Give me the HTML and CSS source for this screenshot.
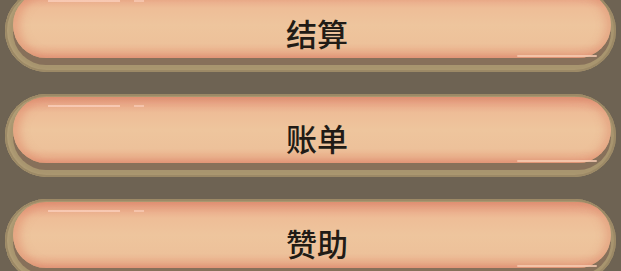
FILE: index.html
```html
<!DOCTYPE html>
<html>
  <head>
    <meta charset="UTF-8" />
    <title>菜单</title>
    <link rel="stylesheet" href="styles.css">
  </head>
  <body>
    <div class="menu">
      <div class="btn"><div class="face">结算</div></div>
      <div class="btn"><div class="face">账单</div></div>
      <div class="btn"><div class="face">赞助</div></div>
    </div>
  </body>
</html>
```
FILE: styles.css
```css
/* menu buttons */
body {
  margin: 0;
  background: #6e6353;
  font-family: "Noto Sans CJK SC", "Noto Sans", sans-serif;
  overflow: hidden;
}
.menu {
  display: flex;
  flex-direction: column;
  gap: 22px;
  margin-top: -11px;
  padding: 0 5px;
}
.btn {
  height: 83px;
  box-sizing: border-box;
  padding: 3px 5px 14px 8px;
  border-radius: 42px;
  background: #a8956f;
  box-shadow: inset 0 0 0 2px #9c8966, inset 3px 0 4px #b9a57c;
}
.face {
  position: relative;
  height: 66px;
  box-sizing: border-box;
  padding: 14px 0 0 10px;
  border-radius: 34px;
  display: flex;
  align-items: center;
  justify-content: center;
  font-size: 31px;
  font-weight: 500;
  color: #211b16;
  background: linear-gradient(to bottom, #e09476 0%, #e9a888 10%, #eebd97 24%, #eec59d 50%, #edc19a 78%, #eab08c 92%, #e39c7e 100%);
  box-shadow: 0 7px 0 #87705a, inset 7px 0 9px rgba(222, 140, 110, 0.55), inset -6px 0 8px rgba(222, 140, 110, 0.45);
}
/* glossy streaks */
.face::before {
  content: "";
  position: absolute;
  left: 35px;
  top: 8px;
  width: 96px;
  height: 2px;
  background: linear-gradient(to right, rgba(250, 205, 185, 0.85) 0, rgba(250, 205, 185, 0.85) 72px, transparent 72px, transparent 86px, rgba(250, 205, 185, 0.7) 86px);
}
.face::after {
  content: "";
  position: absolute;
  right: 14px;
  bottom: 1px;
  width: 80px;
  height: 2px;
  border-radius: 1px;
  background: rgba(248, 205, 180, 0.8);
}
```
